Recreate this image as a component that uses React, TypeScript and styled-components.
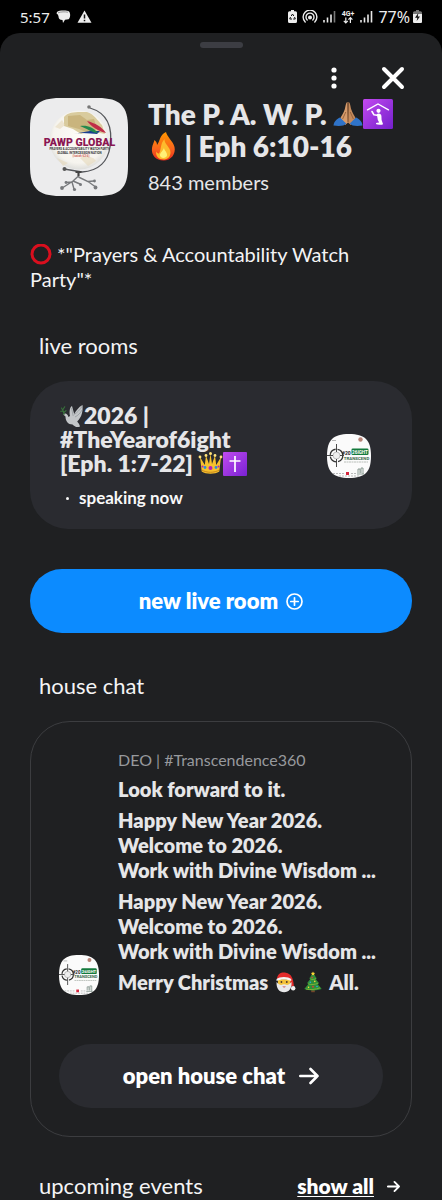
import React from "react";
import styled, { createGlobalStyle } from "styled-components";

const GlobalStyle = createGlobalStyle`
  * { box-sizing: border-box; }
  html, body { margin: 0; background: #000; }
  body { font-family: Lato, "Noto Sans", sans-serif; color: #e6e6e8; overflow-x: hidden; }
  button { font: inherit; color: inherit; border: 0; background: none; padding: 0; cursor: pointer; }
  h1, h2, h3, p { margin: 0; font-weight: 400; }
  svg { display: block; flex: none; }
`;

const Screen = styled.div`
  display: flex;
  flex-direction: column;
  min-height: 100vh;
`;

const StatusBar = styled.div`
  flex: none;
  height: 33px;
  padding: 0 20px;
  display: flex;
  align-items: center;
  justify-content: space-between;
  color: #ededed;
  font-family: "Noto Sans", sans-serif;
  line-height: 20px;
`;

const StatusGroup = styled.div<{ $gap: number; $size: number }>`
  display: flex;
  align-items: center;
  gap: ${(p) => p.$gap}px;
  font-size: ${(p) => p.$size}px;
`;

const Sheet = styled.main`
  flex: 1 0 auto;
  display: flex;
  flex-direction: column;
  padding: 9px 30px 0;
  border-radius: 20px 20px 0 0;
  background: #1f2022;
`;

const Handle = styled.div`
  align-self: center;
  width: 43px;
  height: 6px;
  border-radius: 3px;
  background: #3c3d43;
`;

const Actions = styled.div`
  display: flex;
  justify-content: flex-end;
  align-items: center;
  gap: 44px;
  margin: 18px 7px 8px 0;
  height: 24px;
`;

const Hero = styled.header`
  display: flex;
  gap: 20px;
`;

const Title = styled.h1`
  font-size: 28px;
  line-height: 32px;
  font-weight: 800;
  white-space: nowrap;
`;

const Members = styled.p`
  margin-top: 8px;
  font-size: 20px;
  line-height: 24px;
`;

const Description = styled.p`
  margin-top: 46px;
  font-size: 20px;
  line-height: 25px;
  color: #f4f4f5;
`;

const SectionHead = styled.div<{ $top: number }>`
  display: flex;
  align-items: center;
  justify-content: space-between;
  margin-top: ${(p) => p.$top}px;
  padding: 0 9px;
`;

const SectionTitle = styled.h2`
  font-size: 22px;
  line-height: 24px;
  color: #f4f4f5;
`;

const RoomCard = styled.article`
  display: flex;
  align-items: center;
  justify-content: space-between;
  margin-top: 23px;
  padding: 22px 41px 21px 30px;
  border-radius: 38px;
  background: #2a2b30;
`;

const RoomTitle = styled.h3`
  font-size: 23px;
  line-height: 24px;
  font-weight: 800;
`;

const Speaking = styled.p`
  display: flex;
  align-items: center;
  gap: 10px;
  margin-top: 13px;
  padding-left: 6px;
  font-size: 17px;
  line-height: 20px;
  font-weight: 700;
  color: #f8f8f8;
`;

const Dot = styled.span`
  width: 3px;
  height: 3px;
  border-radius: 50%;
  background: #f8f8f8;
`;

const PillButton = styled.button<{ $primary?: boolean; $top: number; $gap: number }>`
  && {
    display: flex;
    align-items: center;
    justify-content: center;
    gap: ${(p) => p.$gap}px;
    width: 100%;
    height: 64px;
    margin-top: ${(p) => p.$top}px;
    border-radius: 32px;
    background: ${(p) => (p.$primary ? "#0c8bff" : "#2a2b30")};
    color: #fff;
    font-size: 22px;
    line-height: 26px;
    font-weight: 800;
  }
`;

const ChatCard = styled.article`
  margin-top: 23px;
  padding: 27px 28px 28px;
  border: 1px solid #3c3d40;
  border-radius: 40px;
`;

const ChatRow = styled.div`
  display: flex;
  align-items: flex-end;
  gap: 19px;
`;

const Messages = styled.div`
  display: flex;
  flex-direction: column;
  gap: 6px;
  min-width: 0;
`;

const Sender = styled.p`
  font-size: 16px;
  line-height: 22px;
  color: #97999d;
`;

const Message = styled.p`
  font-size: 20px;
  line-height: 25px;
  font-weight: 800;
  white-space: nowrap;
`;

const ShowAll = styled.a`
  display: flex;
  align-items: center;
  gap: 13px;
  padding-right: 3px;
  color: #fff;
  font-size: 21px;
  line-height: 24px;
  font-weight: 800;
  text-decoration: none;
  span { text-decoration: underline; text-underline-offset: 2px; text-decoration-thickness: 1px; }
`;

const Emoji = styled.svg<{ $size: number }>`
  && {
    display: inline-block;
    width: ${(p) => p.$size}px;
    height: ${(p) => p.$size}px;
    vertical-align: 2px;
    margin: -6px 0;
  }
`;

type EmojiProps = { size: number };

const Hands = ({ size }: EmojiProps) => (
  <Emoji $size={size} viewBox="0 0 30 30" aria-label="folded hands">
    <path d="M14.6 3 C12.8 3 12.8 7 11.7 10.5 C10.5 14 8.7 16.5 7.2 19.5 L12.2 26 L15 23.5 Z" fill="#d69a6a" />
    <path d="M15.4 3 C17.2 3 17.2 7 18.3 10.5 C19.5 14 21.3 16.5 22.8 19.5 L17.8 26 L15 23.5 Z" fill="#c58a5b" />
    <path d="M15 3.5 V23" stroke="#7c4c2b" strokeWidth="1" />
    <path d="M12.8 13 L9.6 20 M17.2 13 L20.4 20" stroke="#8c5833" strokeWidth=".8" />
    <path d="M0.5 26.5 C1 22 4 20 7 18.5 L13.2 24.5 C11.5 27 6 27.5 .5 26.5 Z" fill="#2f73c8" />
    <path d="M29.5 26.5 C29 22 26 20 23 18.5 L16.8 24.5 C18.5 27 24 27.5 29.5 26.5 Z" fill="#2f73c8" />
  </Emoji>
);

const Worship = ({ size }: EmojiProps) => (
  <Emoji $size={size} viewBox="0 0 30 30" aria-label="place of worship">
    <defs>
      <linearGradient id="worship" x1="0" y1="0" x2="1" y2="1">
        <stop offset="0" stopColor="#c34af0" />
        <stop offset="1" stopColor="#7420cc" />
      </linearGradient>
    </defs>
    <rect width="30" height="30" rx="1.5" fill="url(#worship)" />
    <path d="M4.5 10.8 L15 5 L25.5 10.8" fill="none" stroke="#fff" strokeWidth="1.4" strokeLinecap="round" />
    <circle cx="15.5" cy="11.8" r="2.1" fill="#fff" />
    <path d="M9 12.5 L11 15.8 L15.5 16.5" fill="none" stroke="#fff" strokeWidth="1.6" strokeLinecap="round" strokeLinejoin="round" />
    <path d="M13.8 15 C16 13.8 18.3 14.8 18.4 17 L18.6 21 L20 25 C19.5 26 18 26 14.5 25.500 C12.5 25.3 12.5 24 14 23.8 L16.2 23.5 L14.8 21 Z" fill="#fff" />
  </Emoji>
);

const Fire = ({ size }: EmojiProps) => (
  <Emoji $size={size} viewBox="0 0 30 30" aria-label="fire">
    <defs>
      <linearGradient id="fire" x1="0" y1="0" x2="0" y2="1">
        <stop offset="0" stopColor="#ff9800" />
        <stop offset=".6" stopColor="#f9641d" />
        <stop offset="1" stopColor="#e8281c" />
      </linearGradient>
    </defs>
    <path d="M18 1 C19 6 25 10 26.5 16 C28 23 23 29.5 15.5 29.5 C8 29.5 3 24 4 17 C4.4 13.5 6 11.5 6.5 9 C8.3 10.5 9 12 9 14 C12 10.5 11.5 4 18 1 Z" fill="url(#fire)" />
    <path d="M16.5 8 C16 13 22.5 16 22.5 21.5 C22.5 26 19.5 28.5 15.5 28.5 C10.5 28.5 7.5 25 8.2 20.5 C9 22 10 22.5 11 22.5 C13.5 18.5 12 13 16.5 8 Z" fill="#fdbb2d" />
    <path d="M16 16.5 C15.8 19.5 19.5 21 19 24.5 C18.5 27.5 12.5 28 12 24.5 C11.6 21.5 15.5 20 16 16.5 Z" fill="#fff176" />
  </Emoji>
);

const Ring = ({ size }: EmojiProps) => (
  <Emoji $size={size} viewBox="0 0 22 22" aria-label="red circle">
    <circle cx="11" cy="10" r="9" fill="none" stroke="#d90f1e" strokeWidth="3" />
  </Emoji>
);

const Dove = ({ size }: EmojiProps) => (
  <Emoji $size={size} viewBox="0 0 24 24" aria-label="dove">
    <path d="M3.2 10.5 C5.5 8.5 7.5 10 8.5 13 L10 12 C9 7 10 3 12 2 L14.2 10 C16 7 18.5 3 22.5 1 C23 7 22 13 17.2 17.5 C18.5 19 19.5 20.5 20 22.5 C17 24 14.5 22.5 12.5 20.5 C8 20.5 5.5 17 5.5 12.5 Z" fill="#c3c6c8" />
    <path d="M14.3 10.5 C17 8.5 20 6 22.3 2 M15 13 C18 11.5 20.5 9 22 6 M11.5 4 L13.2 12" fill="none" stroke="#8e9598" strokeWidth=".7" />
    <path d="M4 10.5 C3.8 8 3 6 1.5 4 M3.5 7 L.7 7.2 M3 5.5 L4.7 2.8 M3.9 8.5 L6 6.6" fill="none" stroke="#38733b" strokeWidth="1.1" strokeLinecap="round" />
  </Emoji>
);

const Crown = ({ size }: EmojiProps) => (
  <Emoji $size={size} viewBox="0 0 25 25" aria-label="crown">
    <path d="M2 6 L6.8 14 L8 4.5 L11 13 L12.5 2.5 L14 13 L17 4.5 L18.2 14 L23 6 L21.3 20.5 C17 23.5 8 23.5 3.7 20.5 Z" fill="#f6c12d" />
    <path d="M3.8 19 C8.5 22 16.5 22 21.2 19" fill="none" stroke="#c9871a" strokeWidth="1" />
    <g fill="#ffe27a">
      <circle cx="2" cy="6" r="1.4" />
      <circle cx="8" cy="4.5" r="1.4" />
      <circle cx="12.5" cy="2.6" r="1.5" />
      <circle cx="17" cy="4.5" r="1.4" />
      <circle cx="23" cy="6" r="1.4" />
    </g>
    <circle cx="12.5" cy="17" r="2" fill="#b61fb4" />
    <circle cx="7" cy="16.5" r="1.4" fill="#2a8be0" />
    <circle cx="18" cy="16.5" r="1.4" fill="#2a8be0" />
    <circle cx="4.5" cy="15.5" r="1" fill="#b61fb4" />
    <circle cx="20.5" cy="15.5" r="1" fill="#b61fb4" />
  </Emoji>
);

const Cross = ({ size }: EmojiProps) => (
  <Emoji $size={size} viewBox="0 0 24 24" aria-label="latin cross">
    <defs>
      <linearGradient id="cross" x1="0" y1="0" x2="1" y2="1">
        <stop offset="0" stopColor="#c04bf0" />
        <stop offset="1" stopColor="#7a22d2" />
      </linearGradient>
    </defs>
    <rect width="24" height="24" rx="1" fill="url(#cross)" />
    <path d="M12 4 V20 M6.5 9 H17.5" stroke="#fff" strokeWidth="1.7" />
  </Emoji>
);

const Santa = ({ size }: EmojiProps) => (
  <Emoji $size={size} viewBox="-1.5 -1.5 27 27" aria-label="santa claus">
    <path d="M3 9 C3 2 9 .5 13 1.5 C19 2.5 21.5 8 22 16.5 L19 17 L17 9 Z" fill="#e32a2a" />
    <path d="M4 9 H18 V16 C18 20 4 20 4 16 Z" fill="#f5c33a" />
    <path d="M2.5 12 C2 19 5.5 23.5 11 23.5 C16.5 23.5 20 19 19.3 12 C17 14.5 15.5 15.5 13.5 15.2 C12.5 14.3 9.5 14.3 8.5 15.2 C6.5 15.5 4.5 14.5 2.5 12 Z" fill="#e9e9ea" />
    <path d="M2.5 8.5 C6 5.5 15.5 5.5 19 8.5 V11 C15.5 8.5 6 8.5 2.5 11 Z" fill="#f4f4f4" />
    <circle cx="8" cy="12" r="1" fill="#4b3628" />
    <circle cx="14" cy="12" r="1" fill="#4b3628" />
    <path d="M9 17.2 C10.3 18.6 11.8 18.6 13 17.2 Z" fill="#c9423b" />
    <circle cx="21.2" cy="19" r="2.5" fill="#f1f1f1" />
  </Emoji>
);

const Tree = ({ size }: EmojiProps) => (
  <Emoji $size={size} viewBox="-1.5 -1.5 27 27" aria-label="christmas tree">
    <path d="M10 19 H14 V23.5 H10 Z" fill="#74452b" />
    <path d="M12 2 L16.3 8 L14.8 8.3 L18.8 13.5 L17 14 L21.8 20 C17 22 7 22 2.2 20 L7 14 L5.2 13.5 L9.2 8.3 L7.7 8 Z" fill="#2f8f3a" />
    <path d="M9 8.5 C11 9.5 13.5 9.3 15.5 8 M6.5 14 C10 15.5 14 15 18 13.3 M4 20 C9 21 15 20.5 20 18.5" fill="none" stroke="#86bd36" strokeWidth=".9" />
    <path d="M12 .2 L12.7 1.7 L14.4 1.9 L13.2 3 L13.5 4.6 L12 3.8 L10.5 4.6 L10.8 3 L9.6 1.9 L11.3 1.7 Z" fill="#fdd835" />
    <circle cx="11" cy="7" r=".9" fill="#e53935" />
    <circle cx="14" cy="11.3" r=".9" fill="#fdd835" />
    <circle cx="9" cy="12.3" r=".9" fill="#29a9e8" />
    <circle cx="12" cy="17.3" r="1" fill="#e53935" />
    <circle cx="16.5" cy="17" r=".9" fill="#29a9e8" />
    <circle cx="7" cy="18" r=".9" fill="#fdd835" />
  </Emoji>
);

const HouseLogo = () => (
  <svg width="98" height="98" viewBox="0 0 98 98" role="img" aria-label="PAWP Global">
    <defs>
      <radialGradient id="globe" cx=".5" cy=".45" r=".55">
        <stop offset="0" stopColor="#fdfcf8" />
        <stop offset=".8" stopColor="#f6f4ee" />
        <stop offset="1" stopColor="#dededb" />
      </radialGradient>
    </defs>
    <path d="M30 0 H68 C90 0 98 8 98 30 V68 C98 90 90 98 68 98 H30 C8 98 0 90 0 68 V30 C0 8 8 0 30 0 Z" fill="#ececed" />
    <circle cx="49" cy="42" r="29.5" fill="url(#globe)" />
    <path d="M34 19 C39 13 48 14 57 14 C64 16 68 23 72 27 L75 36 L60 33 L51 36 L43 31 L34 28 Z" fill="#d9cb9d" />
    <path d="M38 18 L50 17 L57 22 L64 21 L67 31 L58 35 L49 31 L38 28 Z" fill="#bea568" opacity=".6" />
    <path d="M25 29 L32 22 L35 27 L30 31 Z M50 60 C56 57 64 59 66 63 L58 68 Z M27 60 L38 65 L33 68 Z" fill="#e6d9bb" opacity=".6" />
    <path d="M60 10 C77 15 83 29 80 49 C78 63 69 73 52 74 L34 71" fill="none" stroke="#55575b" strokeWidth="1.3" />
    <circle cx="59" cy="9" r="1.8" fill="#777" />
    <circle cx="34.5" cy="71" r="2" fill="#555" />
    <path d="M43 36 C52 34 62 36 67 36 L70 33 L60 33 Z" fill="#1b3e91" />
    <path d="M50 28 C56 30 62 35 68 35 C63 29 57 27 50 28 Z" fill="#248a4e" />
    <path d="M57 23 C62 29 68 33 76 35 C72 29 65 25 57 23 Z" fill="#c02c48" />
    <text x="49.5" y="47.5" textAnchor="middle" fontFamily="Roboto, sans-serif" fontWeight="900" fontSize="10.6" fill="#8a1652">PAWP GLOBAL</text>
    <text x="49.5" y="51.5" textAnchor="middle" fontFamily="Roboto, sans-serif" fontWeight="700" fontSize="2.9" fill="#333">PRAYERS &amp; ACCOUNTABILITY WATCH PARTY</text>
    <text x="49.5" y="55.5" textAnchor="middle" fontFamily="Roboto, sans-serif" fontWeight="700" fontSize="3" fill="#333">GLOBAL INTERCESSION NATION</text>
    <text x="51" y="59" textAnchor="middle" fontFamily="Roboto, sans-serif" fontWeight="700" fontSize="3" fill="#d06a62">(Isaiah 62:6)</text>
    <g fill="none" stroke="#77797c" strokeWidth="1.4">
      <path d="M48.500 73 V79 M48.500 78 L43 83 L33 89.500 M42 84 L44 91 M48.500 79 L58 83.500 L65 88.500 M58 83.500 L64 83 M43 83 L50 86 M42 84 L36 84.500" />
    </g>
    <path d="M45.500 74 H51.500 M48.500 73 V78" stroke="#444" strokeWidth="2" />
    <g fill="#77797c">
      <circle cx="32" cy="90" r="1.9" />
      <circle cx="44.500" cy="91.500" r="1.6" />
      <circle cx="65.500" cy="89.500" r="1.9" />
      <circle cx="64.500" cy="83" r="1.4" />
      <circle cx="36" cy="84.500" r="1.4" />
      <circle cx="50.500" cy="86.500" r="1.5" />
    </g>
  </svg>
);

const RoomLogo = ({ size }: EmojiProps) => (
  <svg width={size} height={size} viewBox="0 0 44 44" role="img" aria-label="2026ight Transcend">
    <path d="M22 0 C38 0 44 6 44 22 C44 38 38 44 22 44 C6 44 0 38 0 22 C0 6 6 0 22 0 Z" fill="#fbfbfb" />
    <circle cx="9.5" cy="21.5" r="6.3" fill="none" stroke="#333" strokeWidth="1.3" strokeDasharray="8 2" />
    <circle cx="9.5" cy="21.5" r="3.5" fill="#eee" stroke="#999" strokeWidth=".6" />
    <path d="M9.5 10 V18 M9.5 25 V33 M0 21.5 H6 M13 21.5 H17" stroke="#333" strokeWidth=".9" />
    <text x="15" y="20.5" fontFamily="Roboto, sans-serif" fontWeight="700" fontSize="5" fill="#222">#20</text>
    <rect x="24.5" y="14.500" width="17" height="6.5" rx="1.3" fill="#147a3d" />
    <text x="33" y="19.6" textAnchor="middle" fontFamily="Roboto, sans-serif" fontWeight="700" fontSize="4.6" fill="#fff">26IGHT</text>
    <text x="29.500" y="25.8" textAnchor="middle" fontFamily="Roboto, sans-serif" fontWeight="700" fontSize="4.4" fill="#38664a">TRANSCEND</text>
    <path d="M17 28 H41" stroke="#aab0aa" strokeWidth=".8" strokeDasharray="2 .5" />
    <circle cx="33.5" cy="5.5" r="2.2" fill="#b78377" />
    <path d="M5 6.5 H9" stroke="#999" strokeWidth=".7" />
    <rect x="19" y="38" width="3" height="3" fill="#d4243b" />
    <path d="M6 39.5 H17 M24 39.5 H29 M12 42 H33" stroke="#aaa" strokeWidth=".8" strokeDasharray="2 1" />
    <path d="M31 39 V35 H33 V39 M34 39 V34 H36 V40 M30 40 H37" fill="none" stroke="#7f9189" strokeWidth=".9" />
  </svg>
);

const Arrow = ({ size, weight }: { size: number; weight: number }) => (
  <svg width={size} height={size} viewBox="0 0 20 20" fill="none" stroke="#fff" strokeWidth={weight} strokeLinecap="round" strokeLinejoin="round" aria-hidden="true">
    <path d="M1.300 10 H18.500 M11.500 3 L18.500 10 L11.500 17" />
  </svg>
);

const PlusCircle = () => (
  <svg width="17" height="17" viewBox="0 0 17 17" fill="none" stroke="#fff" strokeWidth="1.7" strokeLinecap="round" aria-hidden="true">
    <circle cx="8.5" cy="8.5" r="7.5" />
    <path d="M8.5 4.8 V12.2 M4.8 8.5 H12.2" />
  </svg>
);

const SignalBars = ({ last }: { last: string }) => (
  <svg width="13" height="13" viewBox="0 0 13 13" aria-hidden="true">
    <path d="M1 10 V12.5 M4.5 7.5 V12.5 M8 4.5 V12.5" stroke="#e8e8e8" strokeWidth="1.6" />
    <path d="M11.5 1 V12.5" stroke={last} strokeWidth="1.6" />
  </svg>
);

export default function App() {
  return (
    <>
      <GlobalStyle />
      <Screen>
        <StatusBar>
          <StatusGroup $gap={6} $size={15}>
            <span>5:57</span>
            <svg width="15" height="13" viewBox="0 0 15 13" aria-hidden="true">
              <path d="M1 2 C3 .2 11 .2 13 1.5 C14.8 3.5 14.5 8 12.5 9.3 L9 9.8 L7 13 L6.5 10 C3.5 9.8 2.5 8.5 2.5 6.5 C2.5 5.5 1.5 4 .5 3.5 Z" fill="#ededed" />
              <path d="M2 2.8 C5 1.6 9 1.7 12 2.2" fill="none" stroke="#555" strokeWidth=".6" />
            </svg>
            <svg width="15" height="13" viewBox="0 0 15 13" aria-hidden="true">
              <path d="M7.5 .5 L14.5 12.8 H.5 Z" fill="#ededed" />
              <path d="M7.5 4.5 V8.5 M7.5 9.8 V11.3" stroke="#111" strokeWidth="1.5" />
            </svg>
          </StatusGroup>
          <StatusGroup $gap={5} $size={16}>
            <svg width="9" height="13" viewBox="0 0 9 13" aria-hidden="true">
              <path d="M3 0 H6 V1.2 H7.5 Q9 1.2 9 2.7 V11.5 Q9 13 7.5 13 H1.5 Q0 13 0 11.5 V2.7 Q0 1.2 1.5 1.2 H3 Z" fill="#ededed" />
              <path d="M3.2 6 L4.5 4 L5.8 6 M6.5 7 L7.3 9 H5.2 M4 9 H1.7 L2.5 7" fill="none" stroke="#111" strokeWidth="1" />
            </svg>
            <svg width="16" height="14" viewBox="0 0 16 14" fill="none" stroke="#ededed" strokeWidth="1.4" strokeLinecap="round" aria-hidden="true">
              <path d="M3.2 12 A6.9 6.9 0 1 1 12.8 12 M5.2 10 A4 4 0 1 1 10.8 10" />
              <circle cx="8" cy="7.5" r="1.3" fill="#ededed" />
            </svg>
            <SignalBars last="#777" />
            <svg width="14" height="14" viewBox="0 0 14 14" aria-hidden="true">
              <text x="7" y="6" textAnchor="middle" fontFamily="Roboto, sans-serif" fontWeight="700" fontSize="7" fill="#ededed">4G+</text>
              <path d="M4.8 7.5 V12.5 M2.8 10.8 L4.8 12.8 L6.8 10.8 M9.4 13 V8 M7.4 9.7 L9.4 7.7 L11.4 9.7" fill="none" stroke="#ededed" strokeWidth="1.2" />
            </svg>
            <SignalBars last="#e8e8e8" />
            <StatusGroup $gap={3} $size={16}>
              <span>77%</span>
              <svg width="9" height="13" viewBox="0 0 9 13" aria-hidden="true">
                <path d="M3 0 H6 V1.2 H7.5 Q9 1.2 9 2.7 V11.5 Q9 13 7.5 13 H1.5 Q0 13 0 11.5 V2.7 Q0 1.2 1.5 1.2 H3 Z" fill="#777" />
                <path d="M0 4 H9 V11.5 Q9 13 7.5 13 H1.5 Q0 13 0 11.5 Z" fill="#ededed" />
                <path d="M5.3 3 L2 7.8 H4.3 L3.7 11 L7 6.5 H4.8 Z" fill="#111" />
              </svg>
            </StatusGroup>
          </StatusGroup>
        </StatusBar>

        <Sheet>
          <Handle />
          <Actions>
            <button aria-label="More options">
              <svg width="6" height="22" viewBox="0 0 6 22" fill="#fff">
                <circle cx="3" cy="3" r="2.6" />
                <circle cx="3" cy="11" r="2.6" />
                <circle cx="3" cy="19" r="2.6" />
              </svg>
            </button>
            <button aria-label="Close">
              <svg width="24" height="24" viewBox="0 0 24 24" fill="none" stroke="#fff" strokeWidth="4" strokeLinecap="round">
                <path d="M3 3 L21 21 M21 3 L3 21" />
              </svg>
            </button>
          </Actions>

          <Hero>
            <HouseLogo />
            <div>
              <Title>
                The P. A. W. P. <Hands size={30} /><Worship size={30} />
                <br />
                <Fire size={30} /> | Eph 6:10-16
              </Title>
              <Members>843 members</Members>
            </div>
          </Hero>

          <Description>
            <Ring size={22} /> *"Prayers &amp; Accountability Watch
            <br />
            Party"*
          </Description>

          <SectionHead $top={42}>
            <SectionTitle>live rooms</SectionTitle>
          </SectionHead>
          <RoomCard>
            <div>
              <RoomTitle>
                <Dove size={24} />2026 |
                <br />
                #TheYearof6ight
                <br />
                [Eph. 1:7-22] <Crown size={25} /><Cross size={24} />
              </RoomTitle>
              <Speaking>
                <Dot />
                speaking now
              </Speaking>
            </div>
            <RoomLogo size={44} />
          </RoomCard>

          <PillButton $primary $top={40} $gap={8}>
            new live room
            <PlusCircle />
          </PillButton>

          <SectionHead $top={41}>
            <SectionTitle>house chat</SectionTitle>
          </SectionHead>
          <ChatCard>
            <ChatRow>
              <RoomLogo size={40} />
              <Messages>
                <Sender>DEO | #Transcendence360</Sender>
                <Message>Look forward to it.</Message>
                <Message>
                  Happy New Year 2026.
                  <br />
                  Welcome to 2026.
                  <br />
                  Work with Divine Wisdom ...
                </Message>
                <Message>
                  Happy New Year 2026.
                  <br />
                  Welcome to 2026.
                  <br />
                  Work with Divine Wisdom ...
                </Message>
                <Message>
                  Merry Christmas <Santa size={24} /> <Tree size={24} /> All.
                </Message>
              </Messages>
            </ChatRow>
            <PillButton $top={49} $gap={14}>
              open house chat
              <Arrow size={20} weight={2.6} />
            </PillButton>
          </ChatCard>

          <SectionHead $top={37}>
            <SectionTitle>upcoming events</SectionTitle>
            <ShowAll href="#events">
              <span>show all</span>
              <Arrow size={13} weight={2.8} />
            </ShowAll>
          </SectionHead>
        </Sheet>
      </Screen>
    </>
  );
}
